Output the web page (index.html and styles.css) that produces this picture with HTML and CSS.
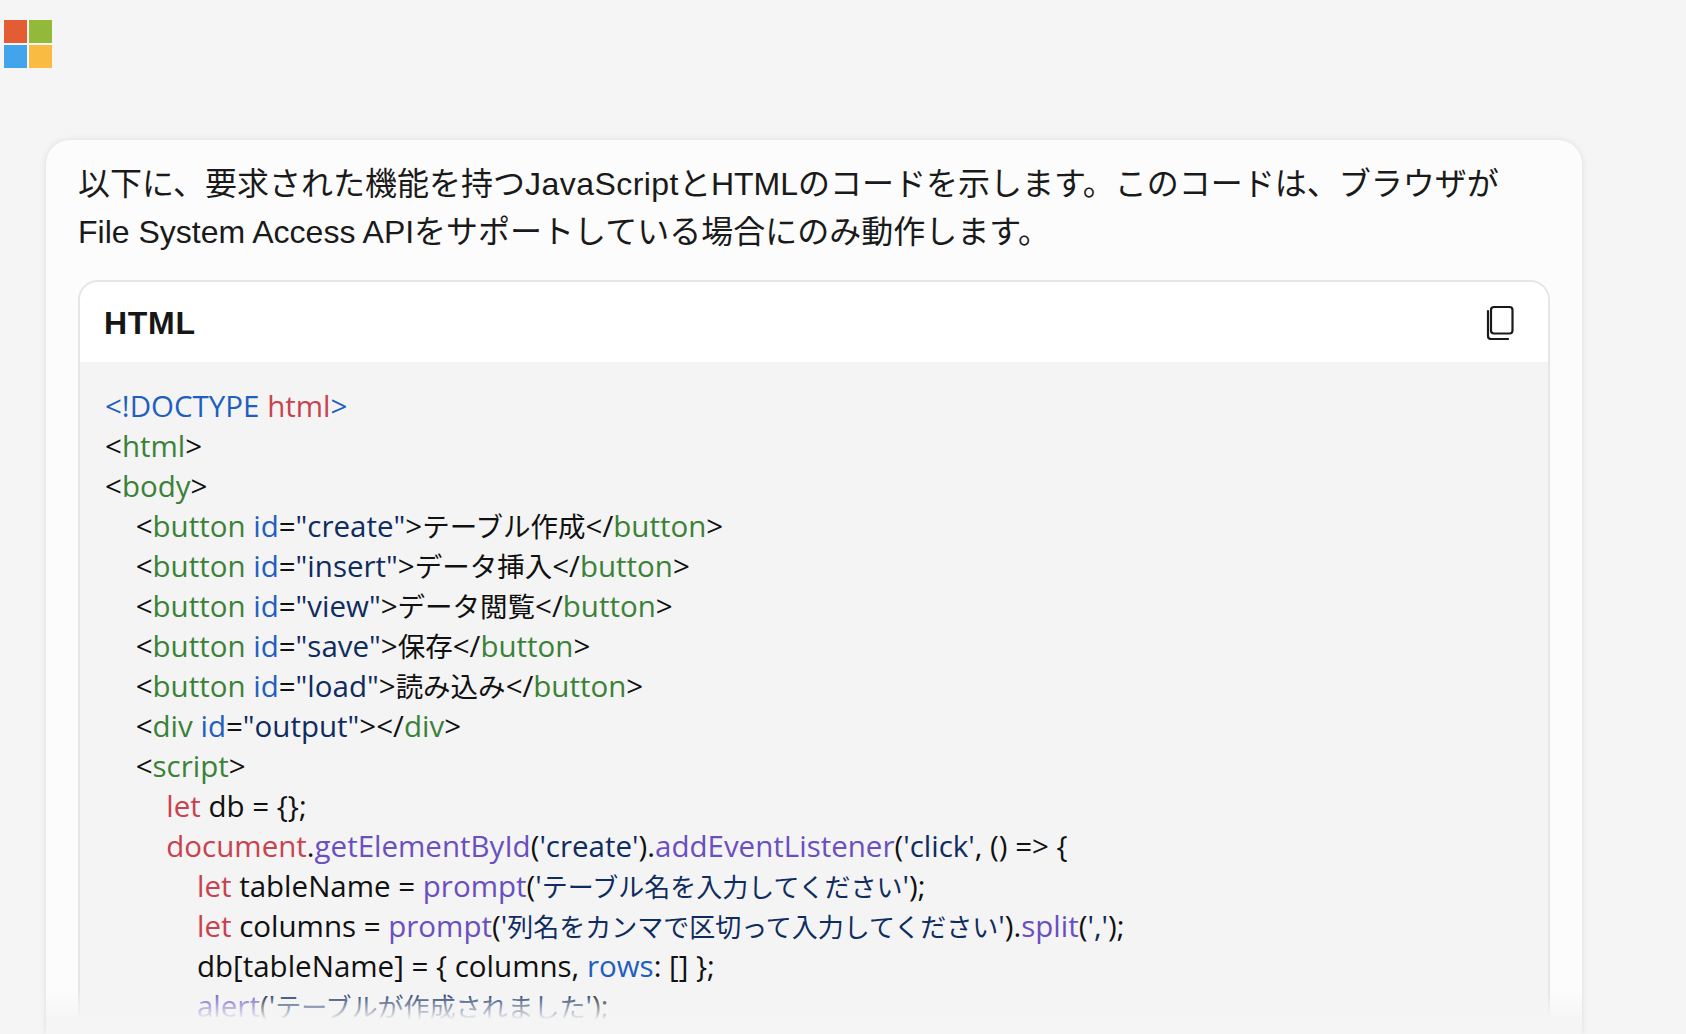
FILE: index.html
```html
<!DOCTYPE html>
<html lang="ja">
<head>
<meta charset="utf-8">
<title>HTML</title>
<link rel="stylesheet" href="styles.css">
</head>
<body>
<div class="logo"><i class="red"></i><i class="green"></i><i class="blue"></i><i class="yellow"></i></div>
<main class="card">
<p class="intro">以下に、要求された機能を持つ<span class="latin">JavaScript</span>とHTMLのコードを示します。このコードは、ブラウザが<br>File System Access APIをサポートしている場合にのみ動作します。</p>
<section class="block">
<header class="head"><span class="lang">HTML</span>
<svg class="copy" viewBox="0 0 28 35" width="28" height="35" fill="none" stroke="#1a1a1a" stroke-width="2.2"><rect x="5" y="2" width="21.5" height="26.5" rx="3"/><path d="M2 6v25a3 3 0 0 0 3 3h17" stroke-linecap="round"/></svg>
</header>
<pre class="code"><span class="b">&lt;!DOCTYPE</span> <span class="r">html</span><span class="b">&gt;</span>
&lt;<span class="g">html</span>&gt;
&lt;<span class="g">body</span>&gt;
    &lt;<span class="g">button</span> <span class="b">id</span>=<span class="s">"create"</span>&gt;<span class="label">テーブル作成</span>&lt;/<span class="g">button</span>&gt;
    &lt;<span class="g">button</span> <span class="b">id</span>=<span class="s">"insert"</span>&gt;<span class="label">データ挿入</span>&lt;/<span class="g">button</span>&gt;
    &lt;<span class="g">button</span> <span class="b">id</span>=<span class="s">"view"</span>&gt;<span class="label">データ閲覧</span>&lt;/<span class="g">button</span>&gt;
    &lt;<span class="g">button</span> <span class="b">id</span>=<span class="s">"save"</span>&gt;<span class="label">保存</span>&lt;/<span class="g">button</span>&gt;
    &lt;<span class="g">button</span> <span class="b">id</span>=<span class="s">"load"</span>&gt;<span class="label">読み込み</span>&lt;/<span class="g">button</span>&gt;
    &lt;<span class="g">div</span> <span class="b">id</span>=<span class="s">"output"</span>&gt;&lt;/<span class="g">div</span>&gt;
    &lt;<span class="g">script</span>&gt;
        <span class="r">let</span> db = {};
        <span class="r">document</span>.<span class="p">getElementById</span>(<span class="s">'create'</span>).<span class="p">addEventListener</span>(<span class="s">'click'</span>, () =&gt; {
            <span class="r">let</span> tableName = <span class="p">prompt</span>(<span class="s">'<span class="jp">テーブル名を入力してください</span>'</span>);
            <span class="r">let</span> columns = <span class="p">prompt</span>(<span class="s">'<span class="jp">列名をカンマで区切って入力してください</span>'</span>).<span class="p">split</span>(<span class="s">','</span>);
            db[tableName] = { columns, <span class="b">rows</span>: [] };
            <span class="p">alert</span>(<span class="s">'<span class="jp">テーブルが作成されました</span>'</span>);
</pre>
</section>
<div class="fade"></div>
</main>
</body>
</html>
```
FILE: styles.css
```css
html, body { margin: 0; height: 100%; overflow: hidden; }
body {
  background: #f5f5f5;
  color: #111;
  font-family: "Liberation Sans", "Noto Sans CJK JP", sans-serif;
  display: flex;
  flex-direction: column;
  height: 1034px;
}
.logo {
  display: grid;
  grid-template-columns: 23px 23px;
  grid-auto-rows: 23px;
  gap: 2px;
  margin: 20px 0 0 4px;
  width: 48px;
  flex: none;
}
.logo i { display: block; }
.red { background: #e35c34; }
.green { background: #93b93a; }
.blue { background: #41a4ec; }
.yellow { background: #f9bb42; }
.card {
  position: relative;
  margin: 72px 0 0 46px;
  width: 1536px;
  height: 894px;
  flex: none;
  box-sizing: border-box;
  padding: 20px 32px 0;
  background: #fcfcfc;
  border-radius: 24px 24px 0 0;
  box-shadow: 0 0 6px rgba(0,0,0,.1);
  overflow: hidden;
}
.intro {
  margin: 0 0 24px;
  font-size: 32px;
  line-height: 48px;
  color: #1a1a1a;
}
.latin { letter-spacing: .45px; }
.block {
  border: 2px solid #e6e6e6;
  border-radius: 20px 20px 0 0;
  overflow: hidden;
  background: #f4f4f4;
  height: 760px;
}
.head {
  display: flex;
  justify-content: space-between;
  align-items: center;
  height: 80px;
  padding: 0 34px 0 24px;
  background: #fff;
}
.lang { padding-top: 2px; font-size: 32px; font-weight: 700; letter-spacing: .7px; color: #161616; }
.code {
  margin: 0;
  padding: 24px 25px 0;
  font-family: "Open Sans", "Noto Sans CJK JP", sans-serif;
  font-size: 29.5px;
  line-height: 40px;
  color: #111;
}
.jp { font-size: 26px; line-height: 0; }
.label { font-size: 27.5px; line-height: 0; }
.b { color: #1f5fbf; }
.r { color: #c9424f; }
.g { color: #3b8238; }
.s { color: #0f2c5f; }
.p { color: #6a4fc0; }
.fade {
  position: absolute;
  left: 0; right: 0; bottom: 0;
  height: 44px;
  background: linear-gradient(to bottom, rgba(245,245,245,0), #f5f5f5 68%);
}
```
